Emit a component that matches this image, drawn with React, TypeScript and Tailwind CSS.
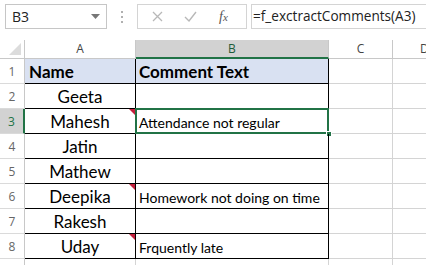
import React from 'react';

interface Row {
  num: number;
  name: string;
  comment: string;
  hasNote: boolean;
}

const rows: Row[] = [
  { num: 2, name: 'Geeta', comment: '', hasNote: false },
  { num: 3, name: 'Mahesh', comment: 'Attendance not regular', hasNote: true },
  { num: 4, name: 'Jatin', comment: '', hasNote: false },
  { num: 5, name: 'Mathew', comment: '', hasNote: false },
  { num: 6, name: 'Deepika', comment: 'Homework not doing on time', hasNote: true },
  { num: 7, name: 'Rakesh', comment: '', hasNote: false },
  { num: 8, name: 'Uday', comment: 'Frquently late', hasNote: true },
];

const cellFont = { fontFamily: 'Lato, "Noto Sans", sans-serif' };

const RowHead: React.FC<{ n: number | string; selected?: boolean }> = ({ n, selected }) => (
  <div
    className={`w-[25px] h-[25px] shrink-0 flex items-center justify-center pt-[2px] text-[12px] border-b border-[#dadada] ${
      selected ? 'bg-[#d2d2d2] text-[#217346] border-r-2 border-r-[#217346]' : 'text-[#666] border-r border-r-[#c8c8c8]'
    }`}
    style={{ fontFamily: '"Open Sans", sans-serif' }}
  >
    {n}
  </div>
);

const GridTail: React.FC = () => (
  <>
    <div className="w-[64px] h-[25px] shrink-0 border-r border-b border-[#d4d4d4]" />
    <div className="flex-1 h-[25px] border-b border-[#d4d4d4]" />
  </>
);

export default function App() {
  return (
    <div className="w-[426px] h-[265px] overflow-hidden bg-white relative select-none">
      {/* formula bar */}
      <div className="flex items-center h-[25px] mt-[4px] pl-[5px]">
        <div className="w-[102px] h-[25px] border border-[#c6c6c6] flex items-center justify-between pl-[6px] pr-[6px] text-[14px] text-[#222]"
          style={{ fontFamily: '"Open Sans", sans-serif' }}>
          <span>B3</span>
          <svg width="9" height="5" viewBox="0 0 9 5"><path d="M0 0h9L4.5 5z" fill="#777" /></svg>
        </div>
        <div className="w-[30px] flex flex-col items-center gap-[3px]">
          <span className="w-[2px] h-[2px] bg-[#b0b0b0]" />
          <span className="w-[2px] h-[2px] bg-[#b0b0b0]" />
          <span className="w-[2px] h-[2px] bg-[#b0b0b0]" />
        </div>
        <div className="w-[110px] h-[25px] border border-[#d4d4d4] flex items-center">
          <svg className="ml-[14px]" width="11" height="11" viewBox="0 0 11 11">
            <path d="M1 1l9 9M10 1l-9 9" stroke="#b8b8b8" strokeWidth="1.3" />
          </svg>
          <svg className="ml-[21px]" width="13" height="11" viewBox="0 0 13 11">
            <path d="M1 6l4 4 7-9" stroke="#b8b8b8" strokeWidth="1.4" fill="none" />
          </svg>
          <span className="ml-[22px] text-[14px] italic text-[#555]" style={{ fontFamily: '"Liberation Serif", serif' }}>
            f<span className="text-[11px]">x</span>
          </span>
        </div>
        <div className="flex-1 h-[25px] ml-[4px] border border-[#d4d4d4] border-r-0 flex items-center pl-[1px] text-[13.6px] text-[#222] whitespace-nowrap"
          style={{ fontFamily: '"Open Sans", sans-serif' }}>
          =f_exctractComments(A3)
        </div>
      </div>

      {/* column headers */}
      <div className="flex mt-[11px] h-[19px]" style={{ fontFamily: '"Open Sans", sans-serif' }}>
        <div className="w-[25px] shrink-0 border-r border-b border-[#c8c8c8] relative">
          <svg className="absolute right-[3px] bottom-[3px]" width="12" height="12" viewBox="0 0 12 12">
            <path d="M12 0v12H0z" fill="#dcdcdc" />
          </svg>
        </div>
        <div className="w-[111px] shrink-0 border-r border-b border-[#c8c8c8] flex items-center justify-center text-[12px] text-[#444]">A</div>
        <div className="w-[193px] shrink-0 bg-[#d2d2d2] border-r border-r-[#c8c8c8] border-b-2 border-b-[#217346] flex items-center justify-center text-[12px] text-[#1e5c3a]">B</div>
        <div className="w-[64px] shrink-0 border-r border-b border-[#c8c8c8] flex items-center justify-center text-[12px] text-[#444]">C</div>
        <div className="flex-1 border-b border-[#c8c8c8] flex items-center pl-[27px] text-[12px] text-[#444]">D</div>
      </div>

      {/* row 1 */}
      <div className="flex">
        <RowHead n={1} />
        <div className="w-[111px] h-[25px] shrink-0 bg-[#d9e1f2] border-r border-b border-black flex items-center pl-[4px] pt-[1px] text-[17px] font-bold text-black" style={cellFont}>
          Name
        </div>
        <div className="w-[193px] h-[25px] shrink-0 bg-[#d9e1f2] border-r border-b border-black flex items-center pl-[3px] pt-[1px] text-[17px] font-bold text-black" style={cellFont}>
          Comment Text
        </div>
        <GridTail />
      </div>

      {rows.map((r) => {
        const sel = r.num === 3;
        return (
          <div key={r.num} className="flex">
            <RowHead n={r.num} selected={sel} />
            <div className="w-[111px] h-[25px] shrink-0 border-r border-b border-black flex items-center justify-center pt-[1px] text-[17px] text-black relative" style={cellFont}>
              {r.name}
              {r.hasNote && (
                <svg className="absolute right-0 top-0" width="6" height="6" viewBox="0 0 6 6">
                  <path d="M0 0h6v6z" fill="#c4203c" />
                </svg>
              )}
            </div>
            <div className="w-[193px] h-[25px] shrink-0 border-r border-b border-black flex items-center pl-[3px] pt-[3px] text-[14px] text-black whitespace-nowrap relative" style={cellFont}>
              {r.comment}
              {sel && (
                <>
                  <div className="absolute left-[-1px] top-[-1px] right-[-1px] bottom-[-1px] border-2 border-[#217346]" />
                  <div className="absolute right-[-4px] bottom-[-4px] w-[6px] h-[6px] bg-[#217346] border border-white" />
                </>
              )}
            </div>
            <GridTail />
          </div>
        );
      })}

      {/* row 9 partial */}
      <div className="flex">
        <RowHead n="" />
        <div className="w-[111px] h-[25px] shrink-0 border-r border-b border-[#d4d4d4]" />
        <div className="w-[193px] h-[25px] shrink-0 border-r border-b border-[#d4d4d4]" />
        <GridTail />
      </div>
    </div>
  );
}
